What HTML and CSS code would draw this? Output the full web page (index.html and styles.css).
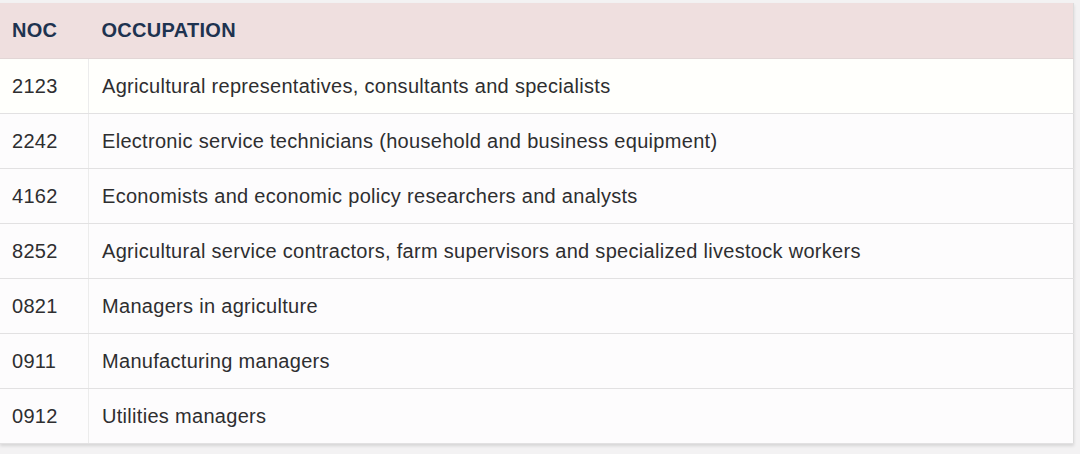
FILE: index.html
```html
<!DOCTYPE html>
<html>
<head>
<meta charset="utf-8">
<link rel="stylesheet" href="styles.css">
</head>
<body>
<div class="wrap">
<table class="noc">
<thead>
<tr><th class="c1">NOC</th><th class="c2">OCCUPATION</th></tr>
</thead>
<tbody>
<tr><td class="c1">2123</td><td class="c2">Agricultural representatives, consultants and specialists</td></tr>
<tr><td class="c1">2242</td><td class="c2">Electronic service technicians (household and business equipment)</td></tr>
<tr><td class="c1">4162</td><td class="c2">Economists and economic policy researchers and analysts</td></tr>
<tr><td class="c1">8252</td><td class="c2">Agricultural service contractors, farm supervisors and specialized livestock workers</td></tr>
<tr><td class="c1">0821</td><td class="c2">Managers in agriculture</td></tr>
<tr><td class="c1">0911</td><td class="c2">Manufacturing managers</td></tr>
<tr><td class="c1">0912</td><td class="c2">Utilities managers</td></tr>
</tbody>
</table>
</div>
</body>
</html>
```
FILE: styles.css
```css
html, body {
  margin: 0;
  padding: 0;
  background: #f3f2f3;
  height: 454px;
  overflow: hidden;
}
.wrap {
  padding-top: 3px;
  width: 1074px;
}
.noc {
  width: 1074px;
  border-collapse: collapse;
  font-family: "Liberation Sans", Arial, sans-serif;
  font-size: 20px;
  letter-spacing: 0.3px;
  color: #2e2e30;
  background: #fdfcfd;
  box-shadow: 0 2px 3px rgba(0,0,0,0.12);
  border-right: 1px solid #dcdcdc;
}
.noc th {
  background: #efdfdf;
  color: #1e3350;
  font-weight: bold;
  text-align: left;
  height: 55px;
  padding: 0;
  border-bottom: 1px solid #e2d6d6;
}
.noc td {
  height: 54px;
  padding: 0;
  border-bottom: 1px solid #e2e1e2;
}
.noc tbody tr:first-child td {
  background: #fffffc;
}
.noc .c1 {
  width: 76px;
  padding-left: 12px;
}
.noc td.c1 {
  border-right: 1px solid #ececec;
}
.noc .c2 {
  padding-left: 13px;
}
```
